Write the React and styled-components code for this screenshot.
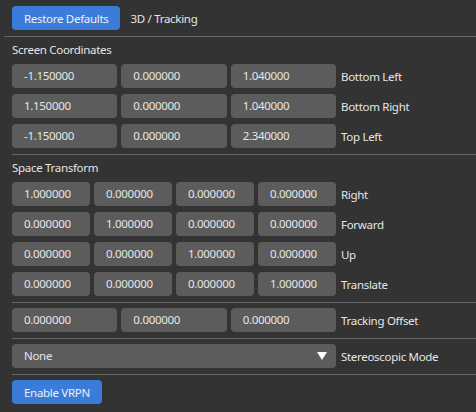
import React from "react";
import styled, { createGlobalStyle } from "styled-components";

const GlobalStyle = createGlobalStyle`
    body {
        margin: 0;
        background: #333333;
        font-family: "Noto Sans", "Open Sans", sans-serif;
        font-size: 11.5px;
        letter-spacing: -0.3px;
        color: #e6e6e6;
    }
`

const Panel = styled.div`
    width : 476px;
    height : 412px;
    box-sizing : border-box;
    padding : 6px 0 0 12px;
    display : flex;
    flex-direction : column;
    overflow : hidden;
`

const Row = styled.div`
    display : flex;
    align-items : center;
    height : 24px;
    margin-bottom : 6px;
`

const Button = styled.button`
    height : 24px;
    padding : 0 12px;
    border : none;
    border-radius : 4px;
    background : #3b7bd9;
    color : #f0f0f0;
    font : inherit;
    letter-spacing : inherit;
`

const Tab = styled.span`
    margin-left : 10px;
`

const Separator = styled.div`
    height : 1px;
    background : #676767;
    margin : 0 0 5px ${(p) => (p.wide ? "-8px" : "0")};
`

const Title = styled.div`
    height : 16px;
    line-height : 16px;
    margin-bottom : 6px;
`

const Fields = styled.div`
    width : 324px;
    display : grid;
    grid-template-columns : repeat(${(p) => p.cols}, 1fr);
    gap : 4px;
`

const Field = styled.div`
    height : 24px;
    line-height : 24px;
    padding-left : 12px;
    border-radius : 4px;
    background : #5c5c5c;
`

const Combo = styled(Field)`
    width : 324px;
    box-sizing : border-box;
    display : flex;
    align-items : center;
    justify-content : space-between;
    padding-right : 8px;
`

const Label = styled.span`
    margin-left : 5px;
`

const FieldRow = ({ values, label }) => (
    <Row>
        <Fields cols={values.length}>
            {values.map((v, i) => (
                <Field key={i}>{v}</Field>
            ))}
        </Fields>
        <Label>{label}</Label>
    </Row>
)

const screen = [
    [["-1.150000", "0.000000", "1.040000"], "Bottom Left"],
    [["1.150000", "0.000000", "1.040000"], "Bottom Right"],
    [["-1.150000", "0.000000", "2.340000"], "Top Left"],
]

const transform = [
    [["1.000000", "0.000000", "0.000000", "0.000000"], "Right"],
    [["0.000000", "1.000000", "0.000000", "0.000000"], "Forward"],
    [["0.000000", "0.000000", "1.000000", "0.000000"], "Up"],
    [["0.000000", "0.000000", "0.000000", "1.000000"], "Translate"],
]

const App = () => {
    return (
        <>
            <GlobalStyle />
            <Panel>
                <Row>
                    <Button>Restore Defaults</Button>
                    <Tab>3D / Tracking</Tab>
                </Row>
                <Separator wide />
                <Title>Screen Coordinates</Title>
                {screen.map(([v, l]) => (
                    <FieldRow key={l} values={v} label={l} />
                ))}
                <Separator />
                <Title>Space Transform</Title>
                {transform.map(([v, l]) => (
                    <FieldRow key={l} values={v} label={l} />
                ))}
                <Separator />
                <FieldRow values={["0.000000", "0.000000", "0.000000"]} label="Tracking Offset" />
                <Separator />
                <Row>
                    <Combo>
                        None
                        <svg width="12" height="10" viewBox="0 0 12 10">
                            <path d="M1 1h10L6 9z" fill="#ffffff" />
                        </svg>
                    </Combo>
                    <Label>Stereoscopic Mode</Label>
                </Row>
                <Separator />
                <Row>
                    <Button>Enable VRPN</Button>
                </Row>
            </Panel>
        </>
    );
};

export default App;
